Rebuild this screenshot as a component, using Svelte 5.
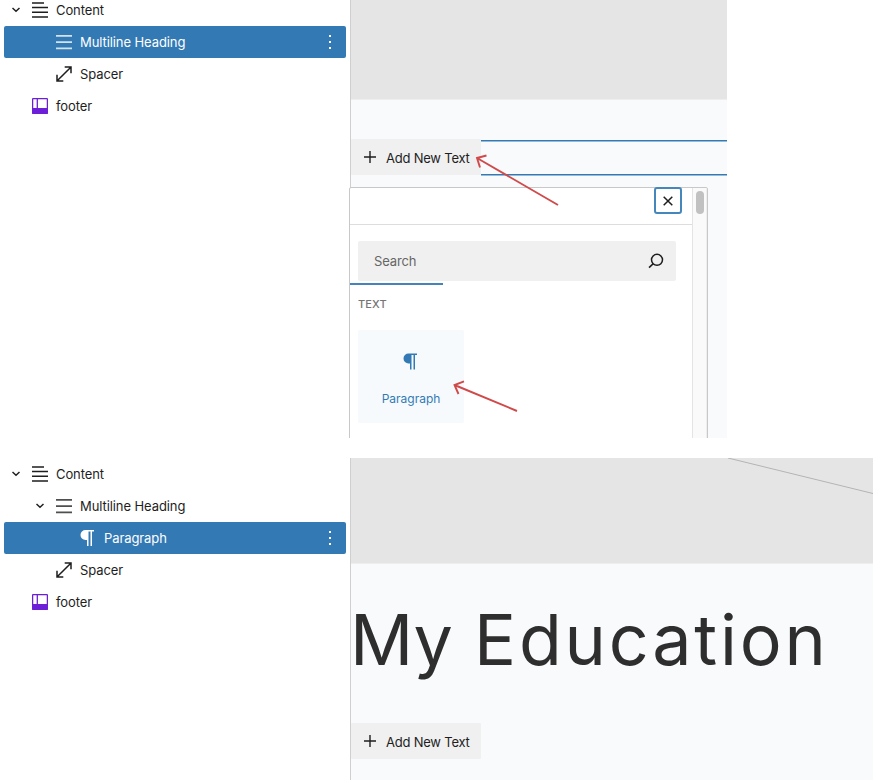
<script>
  const before = [
    { label: 'Content', icon: 'content', depth: 0, open: true },
    { label: 'Multiline Heading', icon: 'lines', depth: 1, selected: true },
    { label: 'Spacer', icon: 'spacer', depth: 1 },
    { label: 'footer', icon: 'footer', depth: 0 }
  ];
  const after = [
    { label: 'Content', icon: 'content', depth: 0, open: true },
    { label: 'Multiline Heading', icon: 'lines', depth: 1, open: true },
    { label: 'Paragraph', icon: 'para', depth: 2, selected: true },
    { label: 'Spacer', icon: 'spacer', depth: 1 },
    { label: 'footer', icon: 'footer', depth: 0 }
  ];
</script>

{#snippet glyph(name)}
  <svg class="glyph" width="16" height="16" viewBox="0 0 16 16" fill="none" stroke="currentColor" stroke-width="1.5">
    {#if name === 'content'}
      <path d="M0 1h12M0 5.500h16M0 10.200h16M0 15h16" stroke-width="1.5" />
    {:else if name === 'lines'}
      <path d="M0 1.800h16M0 8.200h16M0 14.400h16" stroke-width="1.7" opacity=".78" />
    {:else if name === 'spacer'}
      <path d="M1.200 14.800L14.800 1.200M8.700 1h6.300v6.200M1 8.800V15h6.300" />
    {:else if name === 'footer'}
      <rect x=".6" y=".6" width="14.800" height="14.800" rx=".8" fill="#fff" stroke="#6c1fd6" stroke-width="1.300" />
      <path d="M0 10h16V15a1 1 0 0 1-1 1H1a1 1 0 0 1-1-1z" fill="#6c1fd6" stroke="none" />
      <path d="M5.300 1v9.500" stroke="#6c1fd6" stroke-width="1.300" />
    {:else}
      <path d="M5.500 0H14V1.500H12V16h-1.500V1.500H8.500V16H7V10H5.500a5 5 0 0 1 0-10z" fill="currentColor" stroke="none" />
    {/if}
  </svg>
{/snippet}

{#snippet tree(items)}
  <div class="tree">
    {#each items as item}
      <div class="row" class:selected={item.selected} style="padding-left: {item.depth * 24 + 4}px">
        <span class="toggle">
          {#if item.open}
            <svg width="8" height="6" viewBox="0 0 8 6" fill="none" stroke="#1e1e1e" stroke-width="1.5"><path d="M.5 1L4 4.200 7.500 1" /></svg>
          {/if}
        </span>
        {@render glyph(item.icon)}
        <span class="label">{item.label}</span>
        {#if item.selected}<span class="dots"><i></i><i></i><i></i></span>{/if}
      </div>
    {/each}
  </div>
{/snippet}

{#snippet addButton()}
  <button class="add">
    <svg width="12" height="12" viewBox="0 0 12 12" fill="none" stroke="#1e1e1e" stroke-width="1.4"><path d="M0 6h12M6 0v12" /></svg>
    <span>Add New Text</span>
  </button>
{/snippet}

<main>
  <section class="before">
    {@render tree(before)}
    <div class="canvas">
      <div class="block"></div>
      <div class="dropzone">{@render addButton()}<div class="outline"></div></div>
      <div class="popover">
        <div class="content">
          <div class="top">
            <button class="close" aria-label="Close">
              <svg width="10" height="10" viewBox="0 0 10 10" fill="none" stroke="#1e1e1e" stroke-width="1.5"><path d="M.7.7l8.600 8.600M9.300.7L.7 9.300" /></svg>
            </button>
          </div>
          <div class="search">
            <span>Search</span>
            <svg width="16" height="16" viewBox="0 0 16 16" fill="none" stroke="#1e1e1e" stroke-width="1.5"><circle cx="9" cy="6.800" r="5.500" /><path d="M5.300 10.600L1 14.600" /></svg>
          </div>
          <div class="tab"></div>
          <h3>TEXT</h3>
          <div class="card">
            {@render glyph('para')}
            <span>Paragraph</span>
          </div>
        </div>
        <div class="scroll"><div class="thumb"></div></div>
      </div>
    </div>
    <svg class="arrows" width="727" height="438" viewBox="0 0 727 438" fill="none" stroke="#d04a4a" stroke-width="1.900">
      <path d="M558 205L477 158M486.500 155.500L477 158l3 9.500" />
      <path d="M517 411L454.500 385M464 381.300l-9.500 3.700 4 9" />
    </svg>
  </section>

  <section class="after">
    {@render tree(after)}
    <div class="canvas">
      <div class="block">
        <svg width="145" height="36" viewBox="0 0 145 36" stroke="#b4b4b4"><path d="M0 0L145 35.500" /></svg>
      </div>
      <h1><span class="w1">My</span><span class="w2">Education</span></h1>
      {@render addButton()}
    </div>
  </section>
</main>

<style>
  :global(body) { background: #fff; overflow: hidden; }
  * { box-sizing: border-box; }
  main {
    width: 873px; height: 780px; display: flex; flex-direction: column; gap: 20px;
    overflow: hidden; font-family: Inter, sans-serif; font-size: 13px; color: #1e1e1e;
  }
  section { display: flex; position: relative; }
  .before { width: 727px; height: 438px; overflow: hidden; }
  .after { height: 322px; }
  .tree { width: 350px; flex: none; padding: 0 4px; }
  .before .tree { margin-top: -6px; }
  .row { height: 32px; display: flex; align-items: center; border-radius: 2px; }
  .toggle { width: 8px; height: 6px; margin: 0 12px 0 4px; display: flex; }
  .glyph { flex: none; display: block; }
  .label { margin-left: 8px; line-height: 16px; letter-spacing: -0.09px; white-space: nowrap; }
  .selected { background: #337ab5; color: #fff; }
  .dots { margin: 0 15px 0 auto; display: flex; flex-direction: column; gap: 4px; }
  .dots i { width: 2px; height: 2px; background: #fff; }
  .canvas { flex: 1; position: relative; border-left: 1px solid #cfcfcf; background: #f9fafc; min-width: 0; }
  .block { background: #e5e5e5; border-bottom: 1px solid #eee; }
  .before .block { height: 100px; }
  .after .block { height: 106px; display: flex; justify-content: flex-end; }
  .dropzone { margin-top: 39px; height: 37px; display: flex; }
  .outline {
    flex: 1;
    background: linear-gradient(#337ab5, #337ab5) 0 1px / 100% 1.500px no-repeat,
      linear-gradient(#337ab5, #337ab5) 0 35px / 100% 1.500px no-repeat;
  }
  button { font: inherit; color: inherit; padding: 0; border: 0; }
  .add {
    width: 130px; height: 36px; flex: none; background: #f0f0f0; border-radius: 1px;
    display: flex; align-items: center; gap: 10px; padding-left: 13px; white-space: nowrap; letter-spacing: -0.22px;
  }
  .add span { padding-top: 2px; }
  .popover {
    position: absolute; left: -2px; top: 187px; width: 359px; height: 260px;
    border: 1px solid #c8c8c8; border-radius: 2px; background: #fff; display: flex;
  }
  .content { flex: 1; }
  .top { height: 37px; border-bottom: 1px solid #ddd; display: flex; justify-content: flex-end; padding-right: 10px; }
  .close {
    width: 28px; height: 27px; margin-top: -1px; border: 2px solid #4687bb; border-radius: 3px;
    background: #fff; display: flex; align-items: center; justify-content: center;
  }
  .search {
    height: 40px; margin: 16px 16px 0 8px; padding: 0 12px 0 16px; background: #f0f0f0; border-radius: 2px;
    display: flex; align-items: center; justify-content: space-between; color: #666; letter-spacing: -0.15px;
  }
  .tab { width: 93px; height: 2px; margin-top: 2px; background: #4385bb; }
  h3 { margin: 12px 0 0 8px; font-size: 11px; line-height: 14px; font-weight: 500; color: #757575; letter-spacing: .1px; }
  .card {
    width: 106px; height: 93px; margin: 19px 0 0 8px; padding-top: 23px; background: #f6fafd; border-radius: 2px;
    display: flex; flex-direction: column; align-items: center; gap: 22px; color: #337ab5; font-size: 12px; line-height: 16px;
  }
  .card .glyph { height: 17px; margin: 0 0 -1px; }
  .scroll { width: 15px; flex: none; background: #fafafa; border-left: 1px solid #e4e4e4; border-right: 1px solid #eee; padding: 3px 2px 0 3px; }
  .thumb { width: 8px; height: 23px; border-radius: 4px; background: #c1c1c1; }
  .arrows { position: absolute; left: 0; top: 0; }
  h1 { margin: 34px 0 0; height: 125px; font-size: 70px; line-height: 84px; font-weight: 400; color: #2e2e2e; display: flex; white-space: nowrap; }
  .w1 { width: 124px; margin-left: -1px; }
  .w2 { letter-spacing: 2.800px; }
</style>
